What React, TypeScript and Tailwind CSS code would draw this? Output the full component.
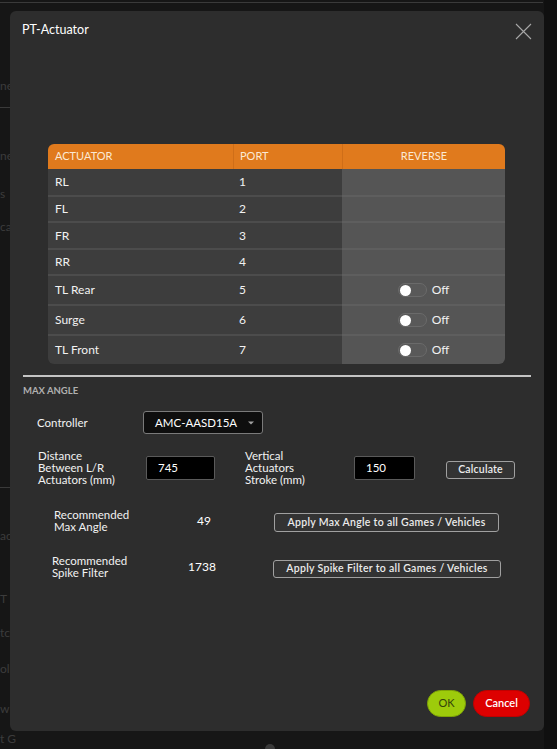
import React from "react";

const FONT = { fontFamily: "Lato, 'Noto Sans', sans-serif" };

function Toggle() {
  return (
    <div className="flex items-center">
      <div className="w-[29px] h-[14px] rounded-full bg-[#595959] border border-[#6a6a6a] flex items-center pl-[1px]">
        <div className="w-[11px] h-[11px] rounded-full bg-white" />
      </div>
      <span className="ml-[5px] text-[12px] text-[#f2f2f2]">Off</span>
    </div>
  );
}

const rows = [
  { name: "RL", port: "1", h: "h-[26px]", toggle: false },
  { name: "FL", port: "2", h: "h-[26px]", toggle: false },
  { name: "FR", port: "3", h: "h-[27px]", toggle: false },
  { name: "RR", port: "4", h: "h-[26px]", toggle: false },
  { name: "TL Rear", port: "5", h: "h-[30px]", toggle: true },
  { name: "Surge", port: "6", h: "h-[30px]", toggle: true },
  { name: "TL Front", port: "7", h: "h-[30px]", toggle: true },
];

export default function App() {
  return (
    <div className="relative w-[557px] h-[749px] overflow-hidden bg-[#161616]" style={FONT}>
      {/* page behind the dialog */}
      <div className="absolute inset-0 text-[12px] text-[#3c3c3c]">
        <div className="absolute left-0 top-[2px] w-[543px] h-px bg-[#3a3a3a]" />
        <div className="absolute right-0 top-0 w-[13px] h-full bg-[#101010]" />
        <div className="absolute left-0 top-[77px]">ne</div>
        <div className="absolute left-0 top-[107px] w-[10px] h-px bg-[#3a3a3a]" />
        <div className="absolute left-0 top-[147px]">ne</div>
        <div className="absolute left-0 top-[185px]">s</div>
        <div className="absolute left-0 top-[218px]">ca</div>
        <div className="absolute left-0 top-[487px] w-[10px] h-px bg-[#3a3a3a]" />
        <div className="absolute left-0 top-[527px]">ac</div>
        <div className="absolute left-0 top-[590px]">T</div>
        <div className="absolute left-0 top-[624px]">tc</div>
        <div className="absolute left-0 top-[660px]">ol</div>
        <div className="absolute left-0 top-[700px]">w</div>
        <div className="absolute left-0 top-[732px] leading-[14px]">t G</div>
        <div className="absolute left-[265px] top-[744px] w-[10px] h-[10px] rounded-full bg-[#3a3a3a]" />
      </div>

      {/* dialog */}
      <div className="relative ml-[10px] mt-[11px] w-[534px] h-[720px] rounded-[6px] bg-[#2d2d2d] flex flex-col">
        <div className="flex justify-between items-start pl-[12px] pr-[12px] pt-[11px]">
          <div className="text-[12.5px] leading-[16px] text-white">PT-Actuator</div>
          <svg width="17" height="17" viewBox="0 0 17 17" className="mt-[1px]">
            <path d="M1 1L16 16M16 1L1 16" stroke="#a8a8a8" strokeWidth="1.1" />
          </svg>
        </div>

        {/* table */}
        <div className="ml-[38px] mt-[104px] w-[457px] rounded-[6px] overflow-hidden">
          <div className="grid grid-cols-[185px_109px_163px] h-[25px] bg-[#e07a1d] text-[11px] text-[#fbe9d4]">
            <div className="flex items-center pl-[7px]">ACTUATOR</div>
            <div className="flex items-center pl-[6px] border-l border-[#cf6e18]">PORT</div>
            <div className="flex items-center justify-center border-l border-[#cf6e18]">REVERSE</div>
          </div>
          {rows.map((r, i) => (
            <div key={i} className={`grid grid-cols-[185px_109px_163px] ${r.h} text-[12px] text-[#f2f2f2]`}>
              <div className={`flex items-center pl-[7px] bg-[#3d3d3d] ${i > 0 ? "border-t-2 border-[#4c4c4c]" : ""}`}>{r.name}</div>
              <div className={`flex items-center pl-[6px] bg-[#3d3d3d] ${i > 0 ? "border-t-2 border-[#4c4c4c]" : ""}`}>{r.port}</div>
              <div className={`flex items-center justify-center bg-[#555555] ${i > 0 ? "border-t-2 border-[#5e5e5e]" : ""}`}>
                {r.toggle ? <Toggle /> : null}
              </div>
            </div>
          ))}
        </div>

        <div className="ml-[13px] mt-[11px] w-[508px] h-[2px] bg-[#c4c4c4]" />

        <div className="ml-[13px] mt-[8px] text-[9.5px] leading-[12px] font-bold text-[#b0b0b0]">MAX ANGLE</div>

        {/* controller */}
        <div className="flex items-center pl-[27px] mt-[14px]">
          <div className="w-[106px] text-[11.5px] text-[#f2f2f2]">Controller</div>
          <div className="w-[120px] h-[23px] rounded-[3px] border border-[#7a7a7a] bg-[#0e0e0e] flex items-center justify-between pl-[11px] pr-[8px]">
            <span className="text-[11.5px] text-white">AMC-AASD15A</span>
            <svg width="6" height="4" viewBox="0 0 6 4">
              <path d="M0 0.5H6L3 3.5Z" fill="#a0a0a0" />
            </svg>
          </div>
        </div>

        {/* distance row */}
        <div className="flex items-center pl-[28px] mt-[16px]">
          <div className="w-[108px] text-[11.5px] leading-[12px] text-[#f2f2f2]">
            Distance<br />Between L/R<br />Actuators (mm)
          </div>
          <div className="w-[69px] h-[24px] rounded-[2px] border border-[#5a5a5a] bg-black flex items-center pl-[11px] text-[11.5px] text-white">745</div>
          <div className="ml-[30px] w-[109px] text-[11.5px] leading-[12px] text-[#f2f2f2]">
            Vertical<br />Actuators<br />Stroke (mm)
          </div>
          <div className="w-[61px] h-[24px] rounded-[2px] border border-[#5a5a5a] bg-black flex items-center pl-[11px] text-[11.5px] text-white">150</div>
          <button className="ml-[31px] mt-[4px] w-[69px] h-[18px] rounded-[3px] border border-[#a0a0a0] bg-[#333333] text-[10.5px] font-semibold tracking-[0.2px] text-[#ececec] flex items-center justify-center">
            Calculate
          </button>
        </div>

        {/* recommended max angle */}
        <div className="flex items-center pl-[44px] mt-[23px]">
          <div className="w-[143px] text-[11.5px] leading-[12px] text-[#f2f2f2]">
            Recommended<br />Max Angle
          </div>
          <div className="w-[77px] text-[12px] text-white">49</div>
          <button className="mt-[3px] w-[225px] h-[19px] rounded-[3px] border border-[#a0a0a0] bg-[#333333] text-[10.5px] font-semibold tracking-[0.3px] text-[#ececec] flex items-center justify-center">
            Apply Max Angle to all Games / Vehicles
          </button>
        </div>

        {/* spike filter */}
        <div className="flex items-center pl-[42px] mt-[22px]">
          <div className="w-[136px] text-[11.5px] leading-[12px] text-[#f2f2f2]">
            Recommended<br />Spike Filter
          </div>
          <div className="w-[85px] text-[12px] text-white">1738</div>
          <button className="mt-[3px] w-[228px] h-[18px] rounded-[3px] border border-[#a0a0a0] bg-[#333333] text-[10.5px] font-semibold tracking-[0.3px] text-[#ececec] flex items-center justify-center">
            Apply Spike Filter to all Games / Vehicles
          </button>
        </div>

        <div className="flex-1" />

        <div className="flex justify-end gap-[7px] pr-[14px] pb-[14px]">
          <button className="w-[39px] h-[27px] rounded-full bg-[#9dcb0b] border border-[#7fa406] text-[11px] text-[#34440a] flex items-center justify-center">
            OK
          </button>
          <button className="w-[57px] h-[27px] rounded-full bg-[#dd0000] border border-[#c00000] text-[11px] font-semibold text-white flex items-center justify-center">
            Cancel
          </button>
        </div>
      </div>
    </div>
  );
}
